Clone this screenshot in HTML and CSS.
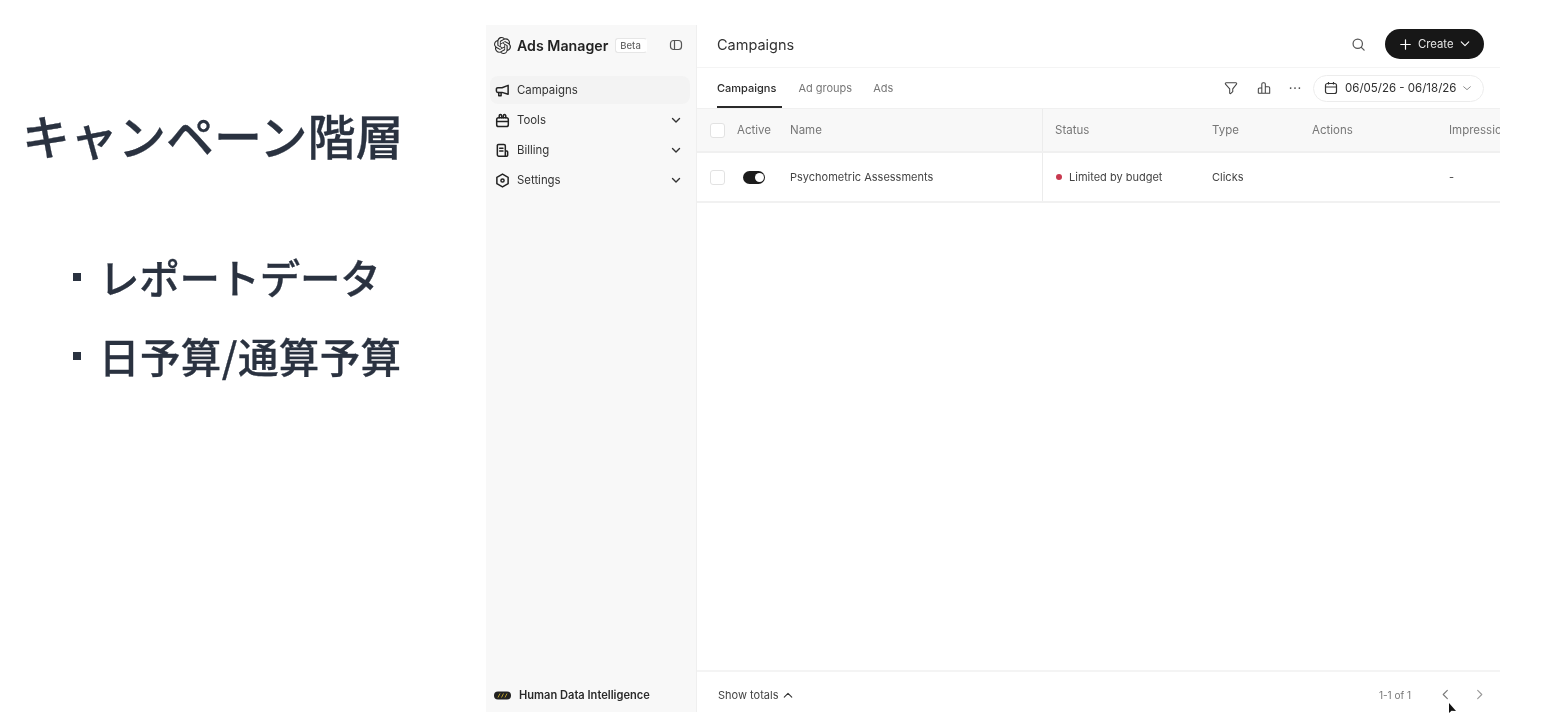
FILE: index.html
```html
<!DOCTYPE html>
<html lang="ja">
<head>
<meta charset="utf-8">
<title>キャンペーン階層</title>
<link rel="stylesheet" href="styles.css">
</head>
<body>
<div class="stage">
  <section class="slide">
    <h1 class="slide-title">キャンペーン階層</h1>
    <ul class="slide-list">
      <li class="slide-item slide-item-tight"><span class="slide-bullet"></span>レポートデータ</li>
      <li class="slide-item"><span class="slide-bullet"></span>日予算/通算予算</li>
    </ul>
  </section>
  <div class="app">
    <aside class="sidebar">
      <div class="brand">
        <svg class="brand-logo" viewBox="0 0 24 24"><path fill="#2a2a2a" d="M22.2819 9.8211a5.9847 5.9847 0 0 0-.5157-4.9108 6.0462 6.0462 0 0 0-6.5098-2.9A6.0651 6.0651 0 0 0 4.9807 4.1818a5.9847 5.9847 0 0 0-3.9977 2.9 6.0462 6.0462 0 0 0 .7427 7.0966 5.98 5.98 0 0 0 .511 4.9107 6.051 6.051 0 0 0 6.5146 2.9001A5.9847 5.9847 0 0 0 13.2599 24a6.0557 6.0557 0 0 0 5.7718-4.2058 5.9894 5.9894 0 0 0 3.9977-2.9001 6.0557 6.0557 0 0 0-.7475-7.0729zm-9.022 12.6081a4.4755 4.4755 0 0 1-2.8764-1.0408l.1419-.0804 4.7783-2.7582a.7948.7948 0 0 0 .3927-.6813v-6.7369l2.02 1.1686a.071.071 0 0 1 .038.052v5.5826a4.504 4.504 0 0 1-4.4945 4.4944zm-9.6607-4.1254a4.4708 4.4708 0 0 1-.5346-3.0137l.142.0852 4.783 2.7582a.7712.7712 0 0 0 .7806 0l5.8428-3.3685v2.3324a.0804.0804 0 0 1-.0332.0615L9.74 19.9502a4.4992 4.4992 0 0 1-6.1408-1.6464zM2.3408 7.8956a4.485 4.485 0 0 1 2.3655-1.9728V11.6a.7664.7664 0 0 0 .3879.6765l5.8144 3.3543-2.0201 1.1685a.0757.0757 0 0 1-.071 0l-4.8303-2.7865A4.504 4.504 0 0 1 2.3408 7.872zm16.5963 3.8558L13.1038 8.364 15.1192 7.2a.0757.0757 0 0 1 .071 0l4.8303 2.7913a4.4944 4.4944 0 0 1-.6765 8.1042v-5.6772a.79.79 0 0 0-.407-.667zm2.0107-3.0231l-.142-.0852-4.7735-2.7818a.7759.7759 0 0 0-.7854 0L9.409 9.2297V6.8974a.0662.0662 0 0 1 .0284-.0615l4.8303-2.7866a4.4992 4.4992 0 0 1 6.6802 4.66zM8.3065 12.863l-2.02-1.1638a.0804.0804 0 0 1-.038-.0567V6.0742a4.4992 4.4992 0 0 1 7.3757-3.4537l-.142.0805L8.704 5.459a.7948.7948 0 0 0-.3927.6813zm1.0976-2.3654l2.602-1.4998 2.6069 1.4998v2.9994l-2.5974 1.4997-2.6067-1.4997Z"/></svg>
        <span class="brand-name">Ads Manager</span>
        <span class="beta">Beta</span>
        <svg class="collapse" viewBox="0 0 14 14" fill="none" stroke="#555" stroke-width="1.2"><rect x="1.5" y="2.5" width="11" height="9" rx="3"/><path d="M5.5 2.5v9"/></svg>
      </div>
      <nav class="nav">
        <a class="nav-item nav-active">
          <svg class="nav-icon" viewBox="0 0 16 16" fill="none" stroke="#222" stroke-width="1.6" stroke-linejoin="round" stroke-linecap="round"><path d="M14 2.500v9.500L7.500 10H3a1.500 1.500 0 0 1-1.500-1.500v-2A1.500 1.500 0 0 1 3 5h4.500z"/><path d="M4 10.200v3.300h2.500v-3.200"/></svg>
          <span>Campaigns</span>
        </a>
        <a class="nav-item">
          <svg class="nav-icon" viewBox="0 0 16 16" fill="none" stroke="#222" stroke-width="1.6" stroke-linejoin="round" stroke-linecap="round"><rect x="1.800" y="5" width="12.400" height="9.500" rx="2"/><path d="M1.800 9h12.400M4.500 5V3a1.300 1.300 0 0 1 2.600 0v2M8.900 5V3a1.300 1.300 0 0 1 2.600 0v2"/></svg>
          <span>Tools</span>
          <svg class="chev" viewBox="0 0 12 12" fill="none" stroke="#333" stroke-width="1.4" stroke-linecap="round" stroke-linejoin="round"><path d="M2.500 4.500 6 8l3.500-3.500"/></svg>
        </a>
        <a class="nav-item">
          <svg class="nav-icon" viewBox="0 0 16 16" fill="none" stroke="#222" stroke-width="1.6" stroke-linejoin="round" stroke-linecap="round"><path d="M11 14H4a1.500 1.500 0 0 1-1.500-1.500v-10A1.500 1.500 0 0 1 4 1.500h5.500A1.500 1.500 0 0 1 11 3v11h1.500a1 1 0 0 0 1-1V9.500a1 1 0 0 0-1-1H11"/><path d="M5 5.500h3.500M5 8.500h3.500"/></svg>
          <span>Billing</span>
          <svg class="chev" viewBox="0 0 12 12" fill="none" stroke="#333" stroke-width="1.4" stroke-linecap="round" stroke-linejoin="round"><path d="M2.500 4.500 6 8l3.500-3.500"/></svg>
        </a>
        <a class="nav-item">
          <svg class="nav-icon" viewBox="0 0 16 16" fill="none" stroke="#222" stroke-width="1.6" stroke-linejoin="round"><path d="M8 1.200 14 4.600v6.800L8 14.800 2 11.400V4.600z"/><circle cx="8" cy="8" r="1.700"/></svg>
          <span>Settings</span>
          <svg class="chev" viewBox="0 0 12 12" fill="none" stroke="#333" stroke-width="1.4" stroke-linecap="round" stroke-linejoin="round"><path d="M2.500 4.500 6 8l3.500-3.500"/></svg>
        </a>
      </nav>
      <div class="org">
        <svg class="org-logo" viewBox="0 0 18 9"><rect x="0" y="0.500" width="17" height="8" rx="4" fill="#222"/><path d="M4 6.500 6 2.500M7.500 6.500l2-4M11 6.500l2-4" stroke="#b59a2a" stroke-width="1"/></svg>
        <span>Human Data Intelligence</span>
      </div>
    </aside>
    <main class="main">
      <header class="topbar">
        <h2 class="page-title">Campaigns</h2>
        <svg class="search" viewBox="0 0 16 16" fill="none" stroke="#555" stroke-width="1.300" stroke-linecap="round"><circle cx="7.200" cy="7.200" r="5"/><path d="m11 11 3 3"/></svg>
        <button class="create">
          <svg class="create-plus" viewBox="0 0 12 12" fill="none" stroke="#fff" stroke-width="1.300" stroke-linecap="round"><path d="M6 .8v10.400M.8 6h10.400"/></svg>
          <span>Create</span>
          <svg class="create-chev" viewBox="0 0 12 12" fill="none" stroke="#fff" stroke-width="1.300" stroke-linecap="round" stroke-linejoin="round"><path d="M1.500 3.500 6 8l4.500-4.500"/></svg>
        </button>
      </header>
      <div class="tabbar">
        <div class="tabs">
          <a class="tab tab-active">Campaigns</a>
          <a class="tab">Ad groups</a>
          <a class="tab">Ads</a>
        </div>
        <div class="tools">
          <svg class="tool tool-filter" viewBox="0 0 16 16" fill="none" stroke="#444" stroke-width="1.200" stroke-linejoin="round" stroke-linecap="round"><path d="M2.500 2h11a1 1 0 0 1 .8 1.600L10 9v3.200L7.500 14.500 6.500 14V9L1.700 3.600A1 1 0 0 1 2.500 2z"/></svg>
          <svg class="tool" viewBox="0 0 16 16" fill="none" stroke="#444" stroke-width="1.200" stroke-linejoin="round"><path d="M1.500 14V9.500A1.500 1.500 0 0 1 3 8h2.500V3.500A1.500 1.500 0 0 1 7 2h1a1.500 1.500 0 0 1 1.500 1.500V14M9.500 6.500H13a1.500 1.500 0 0 1 1.500 1.500v6H1.500M5.500 8v6"/></svg>
          <svg class="tool" viewBox="0 0 16 16" fill="#444"><circle cx="3" cy="8" r="1"/><circle cx="8" cy="8" r="1"/><circle cx="13" cy="8" r="1"/></svg>
          <div class="date">
            <svg class="date-icon" viewBox="0 0 14 14" fill="none" stroke="#333" stroke-width="1.200"><rect x="1.500" y="2.500" width="11" height="10" rx="2"/><path d="M1.500 6h11M4.500 1v2.500M9.500 1v2.500"/></svg>
            <span>06/05/26 - 06/18/26</span>
            <svg class="date-chev" viewBox="0 0 12 12" fill="none" stroke="#777" stroke-width="1" stroke-linecap="round" stroke-linejoin="round"><path d="M2 4.500l4 3.500 4-3.500"/></svg>
          </div>
        </div>
      </div>
      <div class="table">
        <div class="row row-head">
          <div class="cell-fixed">
            <span class="check"></span>
            <span class="col-active">Active</span>
            <span class="col-name">Name</span>
          </div>
          <span class="col-status">Status</span>
          <span class="col-type">Type</span>
          <span class="col-actions">Actions</span>
          <span class="col-imp">Impressions</span>
        </div>
        <div class="row row-body">
          <div class="cell-fixed">
            <span class="check"></span>
            <span class="col-active"><span class="toggle"><span class="knob"></span></span></span>
            <span class="col-name">Psychometric Assessments</span>
          </div>
          <span class="col-status"><span class="dot"></span>Limited by budget</span>
          <span class="col-type">Clicks</span>
          <span class="col-actions"></span>
          <span class="col-imp">-</span>
        </div>
      </div>
      <footer class="footer">
        <span class="totals">Show totals
          <svg class="totals-chev" viewBox="0 0 12 12" fill="none" stroke="#333" stroke-width="1.300" stroke-linecap="round" stroke-linejoin="round"><path d="M1.500 8.500 6 4l4.500 4.500"/></svg>
        </span>
        <span class="pager-text">1-1 of 1</span>
        <svg class="pager pager-prev" viewBox="0 0 12 12" fill="none" stroke="#777" stroke-width="1.200" stroke-linecap="round" stroke-linejoin="round"><path d="M8 1.500 3.500 6 8 10.500"/></svg>
        <svg class="pager" viewBox="0 0 12 12" fill="none" stroke="#999" stroke-width="1.200" stroke-linecap="round" stroke-linejoin="round"><path d="M4 1.500 8.500 6 4 10.500"/></svg>
      </footer>
    </main>
  </div>
</div>
<svg class="cursor" viewBox="0 0 10 12"><path fill="#111" d="M1 0v10l2.500-2.200L8 8z"/></svg>
</body>
</html>
```
FILE: styles.css
```css
* { box-sizing: border-box; }
html, body { margin: 0; height: 100%; background: #fff; overflow: hidden; }
body {
  font-family: Inter, "Noto Sans", sans-serif;
  font-size: 11px;
  color: #2f2f2f;
}
.stage {
  display: flex;
  width: 1562px;
  height: 722px;
  padding-top: 25px;
  filter: blur(0.45px);
}

/* slide text */
.slide { width: 486px; flex: none; padding: 75px 0 0 22px; font-family: "Noto Sans CJK JP", sans-serif; color: #2a3240; }
.slide-title { margin: 0; font-size: 48px; line-height: 68px; font-weight: 500; -webkit-text-stroke: 0.3px #2a3240; white-space: nowrap; }
.slide-list { list-style: none; margin: 69px 0 0 51px; padding: 0; }
.slide-item { display: flex; align-items: center; height: 79px; font-size: 40.500px; letter-spacing: 0.400px; font-weight: 500; -webkit-text-stroke: 0.3px #2a3240; white-space: nowrap; }
.slide-item-tight { letter-spacing: -0.300px; }
.slide-bullet { width: 8px; height: 8px; margin-right: 18px; background: #2a3240; flex: none; }

/* app */
.app { display: flex; width: 1014px; height: 687px; flex: none; }
.sidebar { width: 211px; flex: none; display: flex; flex-direction: column; background: #f8f8f8; border-right: 1px solid #efefef; }
.brand { display: flex; align-items: center; height: 40px; padding: 0 13px 0 8px; }
.brand-logo { width: 17px; height: 17px; flex: none; }
.brand-name { margin-left: 6px; font-size: 14.200px; font-weight: 600; color: #222; }
.beta { margin-left: 7px; padding: 0 4px; height: 15px; line-height: 14px; font-size: 9.500px; font-weight: 500; color: #666; border: 1px solid #e6e6e6; border-radius: 3px; background: #fff; border-right-color: transparent; width: 32px; overflow: hidden; }
.collapse { width: 14px; height: 14px; margin-left: auto; }
.nav { display: flex; flex-direction: column; gap: 2px; margin-top: 11px; padding: 0 6px 0 4px; }
.nav-item { display: flex; align-items: center; height: 28px; padding: 0 8px 0 5px; border-radius: 8px; color: #333; font-size: 11.400px; }
.nav-active { background: #f3f3f3; }
.nav-icon { width: 15px; height: 15px; flex: none; margin-right: 7px; }
.chev { width: 12px; height: 12px; margin-left: auto; }
.org { display: flex; align-items: center; margin-top: auto; height: 36px; padding: 2px 8px 0 8px; font-weight: 600; font-size: 11.100px; color: #2a2a2a; }
.org-logo { width: 18px; height: 9px; margin-right: 7px; flex: none; }

.main { flex: 1; min-width: 0; display: flex; flex-direction: column; overflow: hidden; }
.topbar { display: flex; align-items: center; height: 43px; padding: 0 16px 4px 20px; border-bottom: 1px solid #f4f4f4; }
.page-title { margin: 0; font-size: 14.500px; font-weight: 400; color: #333; margin-right: auto; }
.search { width: 15px; height: 15px; margin-right: 19px; }
.create { display: flex; align-items: center; height: 30px; width: 99px; padding: 0 0 0 15px; border: 0; border-radius: 15px; background: #171717; color: #e6e6e6; font-family: inherit; font-size: 11.300px; }
.create-plus { width: 11px; height: 11px; margin-right: 7px; }
.create-chev { width: 10px; height: 10px; margin-left: 6px; }

.tabbar { display: flex; align-items: stretch; justify-content: space-between; height: 40px; padding: 0 16px 0 20px; }
.tabs { display: flex; gap: 21px; }
.tab { display: flex; align-items: center; padding-top: 2px; color: #777; border-bottom: 2px solid transparent; }
.tab-active { color: #2a2a2a; font-weight: 500; border-bottom-color: #2a2a2a; padding-right: 6px; margin-right: -5px; }
.tools { display: flex; align-items: center; }
.tool { width: 14px; height: 14px; margin-right: 17px; }
.tool-filter { margin-right: 19px; }
.date { display: flex; align-items: center; width: 171px; height: 27px; margin-left: -6px; padding-left: 10px; border: 1px solid #ececec; border-radius: 14px; font-size: 11.500px; }
.date-icon { width: 14px; height: 14px; margin-right: 7px; flex: none; }
.date-chev { width: 10px; height: 10px; margin-left: 6px; }

.table { flex: 1; display: flex; flex-direction: column; }
.row { display: flex; align-items: center; white-space: nowrap; }
.row-head { height: 45px; background: #f8f8f8; border-top: 1px solid #f0f0f0; border-bottom: 2px solid #f0f0f0; color: #777; font-size: 11.500px; }
.row-body { height: 50px; border-bottom: 2px solid #f1f1f1; color: #444; }
.cell-fixed { display: flex; align-items: center; width: 346px; height: 100%; padding-left: 13px; border-right: 1px solid #ececec; flex: none; }
.check { width: 15px; height: 15px; flex: none; border: 1px solid #e2e2e2; border-radius: 3px; background: #fff; }
.col-active { width: 53px; margin-left: 12px; flex: none; display: flex; align-items: center; }
.col-name { flex: none; }
.toggle { display: flex; align-items: center; justify-content: flex-end; width: 22px; height: 13px; margin-left: 6px; padding-right: 1.500px; border-radius: 7px; background: #1c1c1c; }
.knob { width: 9px; height: 9px; border-radius: 50%; background: #fff; }
.col-status { width: 157px; margin-left: 12px; flex: none; display: flex; align-items: center; }
.dot { width: 6px; height: 6px; margin: 0 7px 0 1px; border-radius: 50%; background: #c8394f; }
.col-type { width: 100px; flex: none; }
.col-actions { width: 137px; flex: none; }
.col-imp { flex: none; }

.footer { display: flex; align-items: center; height: 42px; padding: 5px 15px 0 21px; border-top: 2px solid #f4f4f4; color: #444; }
.totals { display: flex; align-items: center; margin-right: auto; }
.totals-chev { width: 10px; height: 10px; margin-left: 5px; }
.pager-text { font-size: 10px; color: #777; margin-right: 29px; }
.pager { width: 11px; height: 11px; }
.pager-prev { margin-right: 23px; }

.cursor { position: absolute; left: 1448px; top: 703px; width: 10px; height: 12px; }
```
